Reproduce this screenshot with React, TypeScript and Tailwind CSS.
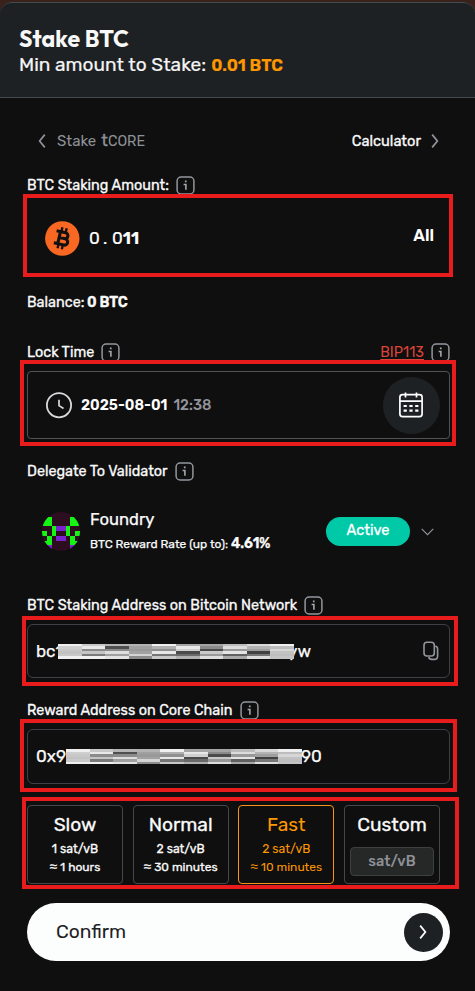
import type { ReactNode } from "react";

function InfoIcon() {
  return (
    <svg width="19" height="19" viewBox="0 0 19 19" fill="none" className="-mt-[2px] shrink-0">
      <rect x="1.1" y="1.1" width="16.8" height="16.8" rx="4" stroke="#92969c" strokeWidth="1.5" />
      <path d="M8.9 5.4h1.7M7.6 8.5h2.3v5.3" stroke="#a4a7ac" strokeWidth="1.6" />
    </svg>
  );
}

function Chevron({ className, dir }: { className?: string; dir: "left" | "right" | "down" }) {
  if (dir === "down")
    return (
      <svg width="13" height="8" viewBox="0 0 13 8" fill="none" className={className}>
        <path d="M.7.8l5.8 5.8L12.3.8" stroke="currentColor" strokeWidth="1.1" />
      </svg>
    );
  return (
    <svg width="8" height="14" viewBox="0 0 8 14" fill="none" className={className}>
      <path
        d={dir === "left" ? "M6.8.6L1.6 7l5.2 6.4" : "M1.2.6L6.4 7l-5.2 6.4"}
        stroke="currentColor"
        strokeWidth="1.7"
      />
    </svg>
  );
}

function Bitcoin() {
  return (
    <svg width="35" height="35" viewBox="0 0 35 35" className="shrink-0">
      <circle cx="17.3" cy="17.5" r="17.2" fill="#f96822" />
      <g transform="rotate(13 17.5 17.5)" fill="none" stroke="#111" strokeWidth="3.1">
        <path d="M10 11.2h9.2a3 3 0 0 1 0 6h-5M14 11.2v12.4M10 23.6h10.2a3.2 3.2 0 0 0 0-6.4h-1" />
        <path d="M14.9 6.6v4.5M19.3 6.6v4.5M14.9 23.6v4.6M19.3 23.6v4.6" strokeWidth="2.3" />
      </g>
    </svg>
  );
}

function Clock() {
  return (
    <svg width="27" height="27" viewBox="0 0 27 27" fill="none" stroke="#d9dadd" className="shrink-0">
      <circle cx="13" cy="13.2" r="12.1" strokeWidth="1.8" />
      <path d="M13 7.8v5.8l4.5 2.9" strokeWidth="1.7" />
    </svg>
  );
}

function Calendar() {
  return (
    <svg width="26" height="28" viewBox="0 0 26 28" fill="none" stroke="#fff" className="mr-px">
      <rect x="1.9" y="3.6" width="22.2" height="22" rx="2.6" strokeWidth="1.7" />
      <path d="M2 10.2h22M7.5 1.4v5M18.5 1.4v5" strokeWidth="1.7" />
      <path d="M5.6 15h3.2M11.4 15h3.2M17.2 15h3.2M5.6 19.6h3.2M11.4 19.6h3.2M17.2 19.6h3.2" strokeWidth="2.2" />
    </svg>
  );
}

function CopyIcon() {
  return (
    <svg width="16" height="20" viewBox="0 0 16 20" fill="none" stroke="#92969c" strokeWidth="1.6">
      <rect x="1" y="1.2" width="10.3" height="13.8" rx="3" />
      <path d="M12.2 5.2c1.7.2 2.4 1.2 2.4 2.8v7c0 2.2-1.1 3.4-3.2 3.4H8.8c-1.7 0-2.8-.8-3.1-2.4" />
    </svg>
  );
}

function Avatar() {
  const g = "#14f514";
  const p = "#7b22cf";
  return (
    <svg width="38" height="39" viewBox="0 0 38 39" className="shrink-0" shapeRendering="crispEdges">
      <defs>
        <clipPath id="round">
          <ellipse cx="19" cy="19.5" rx="19" ry="19.5" />
        </clipPath>
      </defs>
      <g clipPath="url(#round)">
        <path fill="#2d0d20" d="M0 0h38v39H0z" />
        <path
          fill={g}
          d="M0 5h10v9H0zM28 5h10v9H28zM0 19h5v5H0zM33 19h5v5h-5zM10 14h4v10h-4zM24 14h4v10h-4zM5 24h5v9H5zM28 24h5v9h-5zM0 29h5v4H0zM33 29h5v4h-5z"
        />
        <path fill={p} d="M14 14h10v5H14zM14 24h10v5H14zM0 33h10v6H0zM28 33h10v6H28z" />
      </g>
    </svg>
  );
}

const MOSAIC = [
  ["#efefef", "#cfcfcf", "#c8c8c8", "#c2c2c2", "#c9c9c9", "#efefef"],
  ["#c8c8c8", "#e8e8e8", "#8b8b8b", "#c4c4c4", "#7a7a7a", "#f0f0f0"],
  ["#b5b5b5", "#4f4f4f", "#8b8b8b", "#dddddd", "#a0a0a0", "#e2e2e2"],
  ["#b2b2b2", "#a0a0a0", "#999999", "#a2a2a2", "#d4d4d4", "#8c8c8c"],
  ["#efefef", "#b0b0b0", "#8f8f8f", "#e6e6e6", "#757575", "#c8c8c8"],
  ["#a5a5a5", "#e8e8e8", "#d0d0d0", "#4a4a4a", "#6a6a6a", "#b0b0b0"],
  ["#a5a5a5", "#8a8a8a", "#4b4b4b", "#c9c9c9", "#999999", "#dedede"],
  ["#bcbcbc", "#dcdcdc", "#999999", "#e4e4e4", "#606060", "#a9a9a9"],
  ["#d9d9d9", "#b4b4b4", "#a0a0a0", "#424242", "#777777", "#dddddd"],
  ["#f0f0f0", "#bdbdbd", "#d6d6d6", "#c2c2c2", "#bebebe", "#c4c4c4"],
];

function Mosaic() {
  return (
    <div className="relative z-10 flex h-[15px] w-[236px] shrink-0">
      {MOSAIC.map((col, i) => (
        <div key={i} className="flex flex-1 flex-col">
          {col.map((c, j) => (
            <div key={j} className="flex-1" style={{ backgroundColor: c }} />
          ))}
        </div>
      ))}
    </div>
  );
}

function Label({ children, className = "" }: { children: ReactNode; className?: string }) {
  return (
    <div
      className={`flex h-5 items-center gap-[7px] pt-[2px] text-[14.4px] whitespace-nowrap text-[#fafafa] [-webkit-text-stroke-width:0.3px] ${className}`}
    >
      {children}
    </div>
  );
}

function Fee({ name, rate, time, active }: { name: string; rate: string; time: string; active?: boolean }) {
  return (
    <div
      className={`flex w-24 flex-col items-center rounded-[4px] border pt-[5px] whitespace-nowrap ${
        active
          ? "border-[#f7931a] text-[#ff9800]"
          : "border-[#45484b] text-[#fafafa] [-webkit-text-stroke-width:0.3px]"
      }`}
    >
      <div className="text-[19.2px] leading-7">{name}</div>
      <div className="pt-px text-[12.2px] leading-[18px]">{rate}</div>
      <div className="text-[12px] leading-[18px]">
        <span className="font-['Liberation_Sans',sans-serif] text-[13.5px] leading-none">≈</span> {time}
      </div>
    </div>
  );
}

export default function App() {
  return (
    <div className="h-[991px] w-[475px] overflow-hidden bg-[#3a2119] pt-[2px] font-['Rubik','Roboto',sans-serif]">
      <div className="h-[989px] rounded-t-[12px] bg-[#0f0f0f]">
        <header className="h-24 rounded-t-[12px] border-t border-b border-[#454a4f] bg-[#1e2124] pt-[22px] pl-[19px] whitespace-nowrap">
          <h1 className="font-['Outfit','Lato',sans-serif] text-[23px] leading-[27px] font-bold tracking-[0.1px] text-[#f8f8f8]">
            Stake BTC
          </h1>
          <p className="flex items-baseline gap-[5px] text-[19.1px] leading-[26px] text-[#f4f4f4] [-webkit-text-stroke-width:0.2px]">
            <span>Min amount to Stake:</span>
            <span className="text-[16.8px] font-semibold text-[#ff9800]">0.01 BTC</span>
          </p>
        </header>

        <main className="flex flex-col pr-[25px] pl-[27px]">
          <nav className="mt-[33px] flex h-5 items-center justify-between pr-[11px] pl-[11px]">
            <div className="flex items-center gap-[11px] text-[15px] text-[#8e9197]">
              <Chevron dir="left" />
              <span className="flex items-baseline">
                Stake
                <span className="ml-[5px] text-[17px] leading-5 [-webkit-text-stroke-width:0.3px]">t</span>
                <span className="text-[14.3px]">CORE</span>
              </span>
            </div>
            <div className="flex items-center gap-[10px] text-[14.6px] text-[#fafafa] [-webkit-text-stroke-width:0.3px]">
              <span className="pt-[2px]">Calculator</span>
              <Chevron dir="right" className="text-[#92969c]" />
            </div>
          </nav>

          <Label className="mt-6">
            <span>BTC Staking Amount:</span>
            <InfoIcon />
          </Label>
          <div className="relative flex h-[81px] items-center pt-[6px] pr-4 pl-[18px] text-white">
            <Bitcoin />
            <span className="ml-[9px] flex flex-1 items-baseline text-[17px] [-webkit-text-stroke-width:0.2px]">
              <span className="w-[14px]">0</span>
              <span className="w-[9px]">.</span>
              <span>0</span>
              <span className="font-semibold">11</span>
            </span>
            <span className="-mt-[4px] text-[16.5px] font-semibold">All</span>
            <div className="pointer-events-none absolute -top-px -right-[3px] -bottom-px -left-[4px] border-4 border-[#e81c1c]" />
          </div>
          <Label className="mt-4">
            <span>
              Balance: <b className="-ml-px font-semibold tracking-[-0.15px]">0 BTC</b>
            </span>
          </Label>

          <Label className="mt-[30px]">
            <span>Lock Time</span>
            <InfoIcon />
            <a className="ml-auto text-[#db4437] underline underline-offset-2 [-webkit-text-stroke-width:0]">BIP113</a>
            <InfoIcon />
          </Label>
          <div className="relative mt-[9px] flex h-[68px] items-center rounded-[4px] border border-[#505356] pr-[9px] pl-[18px] text-[14.4px]">
            <Clock />
            <span className="ml-[8px] pt-px font-semibold text-white">2025-08-01</span>
            <span className="ml-[6px] pt-px font-medium text-[#92949c]">12:38</span>
            <span className="ml-auto flex size-[57px] items-center justify-center rounded-full bg-[#1e2124]">
              <Calendar />
            </span>
            <div className="pointer-events-none absolute -top-3 -right-[7px] -bottom-2 -left-2 border-4 border-[#e81c1c]" />
          </div>

          <Label className="mt-[22px]">
            <span>Delegate To Validator</span>
            <InfoIcon />
          </Label>
          <div className="mt-[20px] flex h-[60px] items-center pr-4 pl-[15px] whitespace-nowrap">
            <Avatar />
            <div className="ml-[10px] flex-1 text-[#fafafa] [-webkit-text-stroke-width:0.25px]">
              <div className="text-[16.6px] leading-6">Foundry</div>
              <div className="pt-px text-[12px] leading-6">
                BTC Reward Rate (up to): <b className="text-[14px] font-semibold">4.61%</b>
              </div>
            </div>
            <span className="mt-px flex h-[29px] w-[84px] items-center justify-center rounded-full bg-[#00c9a7] pb-[2px] text-[14.6px] text-white [-webkit-text-stroke-width:0.3px]">
              Active
            </span>
            <Chevron dir="down" className="mt-px ml-[11px] text-[#92969c]" />
          </div>

          <Label className="mt-[34px]">
            <span>BTC Staking Address on Bitcoin Network</span>
            <InfoIcon />
          </Label>
          <div className="relative mt-[9px] flex h-[54px] items-center rounded-[6px] border border-[#3d4146] pr-[10px] pl-2 text-[17px] text-[#fafafa] [-webkit-text-stroke-width:0.25px]">
            <span className="w-[22px] pt-px">bc1</span>
            <Mosaic />
            <span className="-ml-[6px] pt-px">yw</span>
            <span className="ml-auto">
              <CopyIcon />
            </span>
            <div className="pointer-events-none absolute -top-[9px] -right-[9px] -bottom-[9px] -left-[6px] border-4 border-[#e81c1c]" />
          </div>

          <Label className="mt-[22px]">
            <span>Reward Address on Core Chain</span>
            <InfoIcon />
          </Label>
          <div className="relative mt-[9px] flex h-[55px] items-center rounded-[6px] border border-[#3d4146] pl-2 text-[17px] text-[#fafafa] [-webkit-text-stroke-width:0.25px]">
            <span className="w-[30px]">0x9</span>
            <Mosaic />
            <span className="-ml-px">90</span>
            <div className="pointer-events-none absolute -top-[11px] -right-2 -bottom-[9px] -left-2 border-4 border-[#e81c1c]" />
          </div>

          <div className="relative mt-[21px] flex h-[79px] justify-between pr-[10px]">
            <Fee name="Slow" rate="1 sat/vB" time="1 hours" />
            <Fee name="Normal" rate="2 sat/vB" time="30 minutes" />
            <Fee name="Fast" rate="2 sat/vB" time="10 minutes" active />
            <div className="flex w-24 flex-col items-center rounded-[4px] border border-[#45484b] pt-[5px] text-[#fafafa]">
              <div className="text-[19.2px] leading-7 [-webkit-text-stroke-width:0.3px]">Custom</div>
              <div className="mt-2 flex h-[29px] w-[84px] items-center justify-center rounded-[4px] border border-[#3d4043] bg-[#262828] text-[14.5px] font-medium text-[#8e9197]">
                sat/vB
              </div>
            </div>
            <div className="pointer-events-none absolute -top-2 -right-[9px] -bottom-[5px] -left-[5px] border-4 border-[#e81c1c]" />
          </div>

          <button className="mt-[19px] flex h-[58px] items-center justify-between rounded-full bg-[#fcfefd] pr-[7px] pl-[29px] text-[19.2px] text-[#1e2124]">
            <span>Confirm</span>
            <span className="flex size-[39px] items-center justify-center rounded-full bg-[#1e2124]">
              <Chevron dir="right" className="mr-px text-white" />
            </span>
          </button>
        </main>
      </div>
    </div>
  );
}
